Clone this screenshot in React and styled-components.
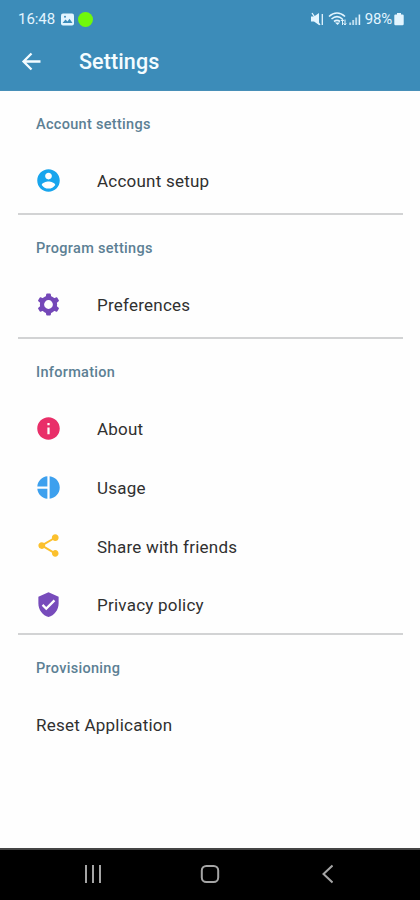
import React from "react";
import styled, { createGlobalStyle } from "styled-components";

const GlobalStyle = createGlobalStyle`
  * { box-sizing: border-box; }
  body { margin: 0; background: #fefefe; font-family: Roboto, "Noto Sans", sans-serif; }
`;

const Screen = styled.div`
  width: 420px;
  height: 900px;
  display: flex;
  flex-direction: column;
  overflow: hidden;
  background: #fefefe;
`;

const TopArea = styled.header`
  height: 91px;
  flex: none;
  background: #3c8cb9;
  color: #f4fcff;
  border-bottom: 1px solid #478fb8;
`;

const StatusBar = styled.div`
  height: 37px;
  padding: 1px 15px 0 18px;
  display: flex;
  align-items: center;
  font-size: 15px;
  color: #e3f5ff;
`;

const Clock = styled.span`
  width: 43px;
  letter-spacing: -0.05px;
`;

const GreenDot = styled.span`
  width: 15px;
  height: 15px;
  margin-left: 4px;
  border-radius: 50%;
  background: #70f80c;
`;

const StatusRight = styled.div`
  margin-left: auto;
  display: flex;
  align-items: center;
`;

const Battery = styled.span`
  margin-left: 3px;
  font-size: 15px;
  letter-spacing: -0.2px;
`;

const AppBar = styled.div`
  height: 49px;
  padding-left: 19px;
  display: flex;
  align-items: center;
`;

const AppTitle = styled.h1`
  margin: 0 0 0 36px;
  font-size: 21.5px;
  font-weight: 500;
  letter-spacing: 0.1px;
`;

const Content = styled.main`
  flex: 1;
  padding: 0 17px 0 18px;
`;

const Section = styled.section`
  height: ${(p) => p.$height}px;
  border-bottom: ${(p) => (p.$last ? "none" : "2px solid #d2d3d4")};
`;

const SectionTitle = styled.h2`
  margin: 0;
  height: 61px;
  padding: 25px 0 0 18px;
  font-size: 14.5px;
  line-height: 18px;
  font-weight: 500;
  letter-spacing: 0.3px;
  color: #5c8094;
`;

const Row = styled.div`
  height: 58.7px;
  padding-left: 18px;
  display: flex;
  align-items: center;
  font-size: 17px;
  letter-spacing: 0.23px;
  color: #303030;
`;

const IconSlot = styled.span`
  width: 61px;
  display: flex;
  margin: -2px 1px 0 -1px;
`;

const NavBar = styled.nav`
  height: 52px;
  flex: none;
  background: #000;
  border-top: 2px solid #454545;
  display: flex;
  align-items: center;
  padding: 0 34px 2px;
`;

const NavButton = styled.span`
  flex: 1;
  display: flex;
  justify-content: center;
`;

const paths = {
  account:
    "M12 2C6.48 2 2 6.48 2 12s4.48 10 10 10 10-4.48 10-10S17.52 2 12 2zm0 3c1.66 0 3 1.34 3 3s-1.34 3-3 3-3-1.34-3-3 1.34-3 3-3zm0 14.2a7.2 7.2 0 0 1-6-3.22c.03-1.99 4-3.08 6-3.08 1.99 0 5.97 1.09 6 3.08a7.2 7.2 0 0 1-6 3.22z",
  info:
    "M12 2C6.48 2 2 6.48 2 12s4.48 10 10 10 10-4.48 10-10S17.52 2 12 2zm1 15h-2v-6h2v6zm0-8h-2V7h2v2z",
  usage:
    "M11 2.05V11H2.05C2.5 6.2 6.2 2.5 11 2.05zM13 2.05c5 .5 9 4.7 9 9.95s-4 9.45-9 9.95V2.05zM2.05 13H11v8.95C6.2 21.5 2.5 17.8 2.05 13z",
  share:
    "M18 16.08c-.76 0-1.44.3-1.96.77L8.91 12.7c.05-.23.09-.46.09-.7s-.04-.47-.09-.7l7.05-4.11c.54.5 1.25.81 2.04.81 1.66 0 3-1.34 3-3s-1.34-3-3-3-3 1.34-3 3c0 .24.04.47.09.7L8.04 9.81C7.5 9.31 6.79 9 6 9c-1.66 0-3 1.34-3 3s1.34 3 3 3c.79 0 1.5-.31 2.04-.81l7.12 4.16c-.05.21-.08.43-.08.65 0 1.61 1.31 2.92 2.92 2.92s2.92-1.31 2.92-2.92-1.31-2.92-2.92-2.92z",
  shield:
    "M12 1 3 5v6c0 5.55 3.84 10.74 9 12 5.16-1.26 9-6.45 9-12V5l-9-4zm-2 16-4-4 1.41-1.41L10 14.17l6.59-6.59L18 9l-8 8z",
};

const sections = [
  {
    title: "Account settings",
    height: 124,
    rows: [{ label: "Account setup", icon: "account", color: "#18a5ed" }],
  },
  {
    title: "Program settings",
    height: 124,
    rows: [{ label: "Preferences", icon: "gear", color: "#7448b8" }],
  },
  {
    title: "Information",
    height: 296,
    rows: [
      { label: "About", icon: "info", color: "#e92f69" },
      { label: "Usage", icon: "usage", color: "#3da0ee" },
      { label: "Share with friends", icon: "share", color: "#fbc02d" },
      { label: "Privacy policy", icon: "shield", color: "#774bbb" },
    ],
  },
  { title: "Provisioning", height: 124, last: true, rows: [{ label: "Reset Application" }] },
];

function RowIcon({ name, color }) {
  if (name === "gear") {
    return (
      <svg width="27" height="27" viewBox="0 0 24 24" fill="none" stroke={color}>
        <circle cx="12" cy="12" r="5.8" strokeWidth="3.8" />
        {[0, 60, 120].map((a) => (
          <path
            key={a}
            d="M10.7 2.9h2.6l.4 2.6h-3.4zM10.3 18.5h3.4l-.4 2.6h-2.6z"
            fill={color}
            strokeWidth="1.5"
            strokeLinejoin="round"
            transform={`rotate(${a} 12 12)`}
          />
        ))}
      </svg>
    );
  }
  return (
    <svg width="27" height="27" viewBox="0 0 24 24" fill={color}>
      <path d={paths[name]} />
    </svg>
  );
}

function StatusIcons() {
  return (
    <svg width="51" height="16" viewBox="0 0 51 16" fill="none" stroke="currentColor">
      <path d="M0 5.5h3l5-3.5v12l-5-3.5H0z" fill="currentColor" stroke="none" />
      <path d="m1 2 8 12M11.3 3v11" strokeWidth="1.3" />
      <path d="M18 5.5c5-4.5 11-4.5 16 0M20.5 8c3.5-3 7.5-3 11 0M23 10.5c2-1.5 4-1.5 6 0" strokeWidth="1.6" />
      <path d="m24 11.5 2.5 2.5 2.5-2.5z" fill="currentColor" stroke="none" />
      <path d="M31.5 14V8.5M30 10l1.5-1.8L33 10M34 8.5V14m-1.5-1.7L34 14l1.2-1.7" strokeWidth="1" />
      <path d="M39.2 14v-2.5M42.2 14v-5M45.2 14V6.5" strokeWidth="1.9" opacity=".75" />
      <path d="M48.4 14V3.5" strokeWidth="1.6" />
    </svg>
  );
}

export default function App() {
  return (
    <>
      <GlobalStyle />
      <Screen>
        <TopArea>
          <StatusBar>
            <Clock>16:48</Clock>
            <svg width="13" height="13" viewBox="0 0 13 13">
              <rect y=".5" width="13" height="12" rx="2" fill="currentColor" />
              <path d="m1.5 10 3-3.5 2 2 2-2.8 3 4.3z" fill="#3c8cb9" />
              <circle cx="4" cy="3.7" r="1" fill="#3c8cb9" />
            </svg>
            <GreenDot />
            <StatusRight>
              <StatusIcons />
              <Battery>98%</Battery>
              <svg width="13" height="14" viewBox="0 0 13 14">
                <path d="M5 1h4v1.5h1.5q1.2 0 1.2 1V12q0 1.2-1.2 1.2h-7Q2.3 13.2 2.3 12V3.5q0-1 1.2-1H5z" fill="currentColor" />
              </svg>
            </StatusRight>
          </StatusBar>
          <AppBar>
            <svg width="24" height="24" viewBox="0 0 24 24" fill="none" stroke="currentColor" strokeWidth="2.3">
              <path d="M21.5 11.5H5M12.5 3.5l-8 8 8 8" />
            </svg>
            <AppTitle>Settings</AppTitle>
          </AppBar>
        </TopArea>
        <Content>
          {sections.map((s) => (
            <Section key={s.title} $height={s.height} $last={s.last}>
              <SectionTitle>{s.title}</SectionTitle>
              {s.rows.map((r) => (
                <Row key={r.label}>
                  {r.icon && (
                    <IconSlot>
                      <RowIcon name={r.icon} color={r.color} />
                    </IconSlot>
                  )}
                  {r.label}
                </Row>
              ))}
            </Section>
          ))}
        </Content>
        <NavBar>
          <NavButton>
            <svg width="18" height="20" viewBox="0 0 18 20" stroke="#a5a5a5" strokeWidth="2">
              <path d="M2 1v18M9 1v18M16 1v18" />
            </svg>
          </NavButton>
          <NavButton>
            <svg width="20" height="20" viewBox="0 0 20 20" fill="none" stroke="#a5a5a5" strokeWidth="2">
              <rect x="1.8" y="2" width="16.4" height="16" rx="4.5" />
            </svg>
          </NavButton>
          <NavButton>
            <svg width="12" height="20" viewBox="0 0 12 20" fill="none" stroke="#a5a5a5" strokeWidth="2">
              <path d="m11.5 1.5-9 8.5 9 8.5" />
            </svg>
          </NavButton>
        </NavBar>
      </Screen>
    </>
  );
}
